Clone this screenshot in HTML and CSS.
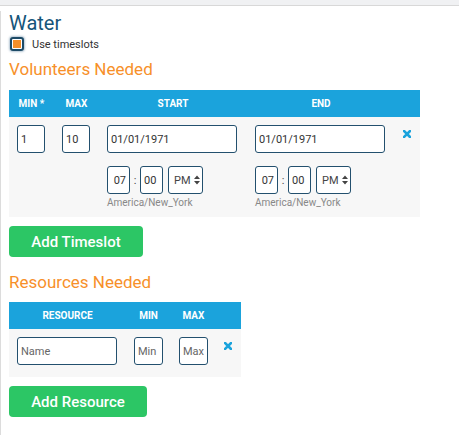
FILE: index.html
```html
<!DOCTYPE html>
<html>
<head>
<meta charset="utf-8">
<link rel="stylesheet" href="styles.css">
</head>
<body>
<div class="topbar"></div>
<div class="panel">
  <h2 class="title">Water</h2>
  <label class="check"><span class="box"><span class="fill"></span></span>Use timeslots</label>
  <h3 class="section">Volunteers Needed</h3>
  <div class="tbl vol">
    <div class="thead">
      <div class="th">MIN *</div>
      <div class="th">MAX</div>
      <div class="th">START</div>
      <div class="th">END</div>
      <div class="th"></div>
    </div>
    <div class="tbody">
      <div class="td"><input class="inp num" value="1"></div>
      <div class="td"><input class="inp num" value="10"></div>
      <div class="td">
        <input class="inp date" value="01/01/1971">
        <div class="time">
          <input class="inp hh" value="07"><span class="colon">:</span><input class="inp mm" value="00">
          <div class="ampm">PM<svg width="6" height="10" viewBox="0 0 6 10"><path d="M0 4 L3 0.5 L6 4 Z M0 6 L3 9.5 L6 6 Z" fill="#444"/></svg></div>
        </div>
        <div class="tz">America/New_York</div>
      </div>
      <div class="td">
        <input class="inp date" value="01/01/1971">
        <div class="time">
          <input class="inp hh" value="07"><span class="colon">:</span><input class="inp mm" value="00">
          <div class="ampm">PM<svg width="6" height="10" viewBox="0 0 6 10"><path d="M0 4 L3 0.5 L6 4 Z M0 6 L3 9.5 L6 6 Z" fill="#444"/></svg></div>
        </div>
        <div class="tz">America/New_York</div>
      </div>
      <div class="td x"><svg width="8" height="8" viewBox="0 0 8 8"><path d="M1 1 L7 7 M7 1 L1 7" stroke="#1ba3dc" stroke-width="2.6" stroke-linecap="square"/></svg></div>
    </div>
  </div>
  <button class="btn btn-ts">Add Timeslot</button>
  <h3 class="section res-title">Resources Needed</h3>
  <div class="tbl res">
    <div class="thead">
      <div class="th">RESOURCE</div>
      <div class="th">MIN</div>
      <div class="th">MAX</div>
      <div class="th"></div>
    </div>
    <div class="tbody">
      <div class="td"><input class="inp name" placeholder="Name"></div>
      <div class="td"><input class="inp small" placeholder="Min"></div>
      <div class="td"><input class="inp small" placeholder="Max"></div>
      <div class="td x"><svg width="8" height="8" viewBox="0 0 8 8"><path d="M1 1 L7 7 M7 1 L1 7" stroke="#1ba3dc" stroke-width="2.6" stroke-linecap="square"/></svg></div>
    </div>
  </div>
  <button class="btn btn-res">Add Resource</button>
</div>
</body>
</html>
```
FILE: styles.css
```css
* { box-sizing: border-box; }
body {
  margin: 0;
  font-family: Roboto, "Liberation Sans", sans-serif;
  background: #fff;
  color: #333;
}
.topbar {
  height: 6px;
  background: #f0f1f3;
  border-bottom: 1px solid #d8d8d8;
}
.panel {
  height: 428px;
  border-left: 1px solid #dcdcdc;
  border-bottom: 2px solid #dcdcdc;
  padding: 0 8px;
}
.title {
  margin: 5px 0 0;
  font-size: 20px;
  line-height: 24px;
  font-weight: 400;
  color: #15557a;
}
.check {
  display: flex;
  align-items: center;
  height: 16px;
  margin-top: 1px;
  font-size: 11px;
  color: #333;
}
.box {
  width: 14px;
  height: 14px;
  margin: 0 8px 0 1px;
  border: 2px solid #1d4a66;
  border-radius: 3px;
  background: #fff;
  display: flex;
  align-items: center;
  justify-content: center;
  box-shadow: 0 0 2px 1px rgba(40, 90, 130, 0.35);
}
.fill {
  width: 8px;
  height: 8px;
  background: #f7902a;
}
.section {
  margin: 7px 0 0;
  font-size: 17px;
  line-height: 20px;
  font-weight: 400;
  color: #f7902a;
}
.tbl { margin-top: 11px; }
.thead, .tbody { display: grid; }
.vol .thead, .vol .tbody { grid-template-columns: 45px 45px 148px 148px 25px; width: 411px; }
.res .thead, .res .tbody { grid-template-columns: 117px 45px 45px 25px; width: 232px; }
.thead {
  background: #1ba3dc;
  height: 27px;
}
.th {
  color: #fff;
  font-size: 10px;
  font-weight: 700;
  text-align: center;
  line-height: 27px;
}
.tbody { background: #f7f7f7; }
.vol .tbody { height: 100px; }
.res .tbody { height: 48px; }
.td { padding: 8px 0 0 8px; }
.inp {
  display: block;
  height: 28px;
  border: 1px solid #23506e;
  border-radius: 3px;
  background: #fff;
  font-family: Roboto, "Liberation Sans", sans-serif;
  font-size: 11px;
  color: #333;
  padding: 0 3px;
  outline: none;
}
.inp::placeholder { color: #666; }
.num { width: 28px; }
.date { width: 130px; }
.time {
  display: flex;
  align-items: center;
  margin-top: 13px;
}
.hh { width: 23px; text-align: right; }
.mm { width: 23px; }
.colon {
  width: 10px;
  text-align: center;
  font-size: 11px;
  color: #444;
}
.ampm {
  margin-left: 5px;
  width: 35px;
  height: 28px;
  border: 1px solid #23506e;
  border-radius: 3px;
  background: #fff;
  font-size: 11px;
  color: #444;
  display: flex;
  align-items: center;
  padding-left: 5px;
  gap: 3px;
}
.tz {
  margin-top: 3px;
  font-size: 10px;
  color: #888;
}
.x { padding-top: 13px; }
.x svg { display: block; }
.name { width: 100px; }
.small { width: 29px; }
.btn {
  display: block;
  height: 31px;
  border: none;
  border-radius: 4px;
  background: #2cc665;
  color: #fff;
  font-family: Roboto, "Liberation Sans", sans-serif;
  font-size: 15px;
  font-weight: 500;
  padding: 0;
  margin-top: 9px;
}
.btn-ts { width: 134px; }
.btn-res { width: 138px; }
.res-title { margin-top: 15px; }
.res { margin-top: 10px; }
```
